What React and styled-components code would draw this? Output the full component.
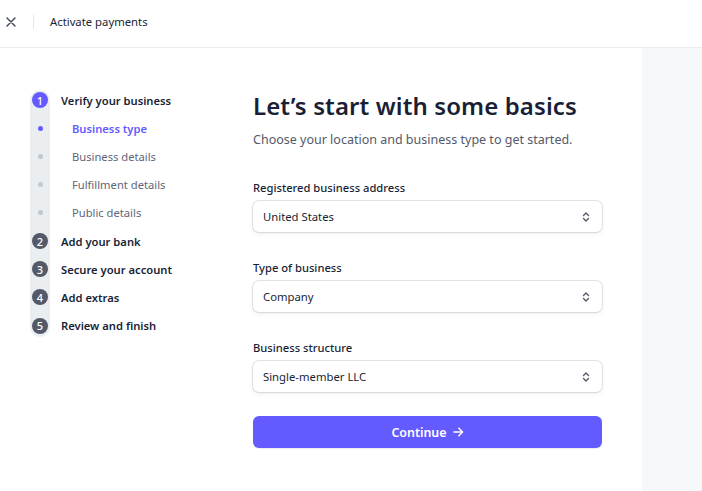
import styled, { createGlobalStyle } from "styled-components";
import React from "react";

const GlobalStyle = createGlobalStyle`
  * { box-sizing: border-box; }
  body {
    margin: 0;
    font-family: "Noto Sans", "Open Sans", sans-serif;
    color: #1a1f36;
    background: #fff;
  }
`;

const Page = styled.div`
  width: 702px;
  height: 491px;
  display: flex;
  flex-direction: column;
  overflow: hidden;
`;

const TopBar = styled.header`
  height: 48px;
  display: flex;
  align-items: center;
  padding-bottom: 4px;
  border-bottom: 1px solid #ebeef1;
  flex-shrink: 0;
`;

const CloseButton = styled.button`
  border: none;
  background: none;
  padding: 0;
  width: 22px;
  display: flex;
  justify-content: center;
  color: #3c4257;
`;

const Divider = styled.span`
  width: 1px;
  height: 14px;
  background: #e3e8ee;
  margin: 0 16px 0 11px;
`;

const TopTitle = styled.span`
  font-size: 11.3px;
  color: #1a1f36;
`;

const Body = styled.div`
  flex: 1;
  display: flex;
`;

const Main = styled.main`
  flex: 1;
  display: flex;
  align-items: flex-start;
  padding: 38px 0 0 30px;
`;

const Side = styled.aside`
  width: 60px;
  background: #f6f8fa;
`;

const StepList = styled.ol`
  position: relative;
  list-style: none;
  margin: 0;
  padding: 0;
  width: 223px;
  &::before {
    content: "";
    position: absolute;
    left: 0;
    top: 4px;
    bottom: 3px;
    width: 20px;
    border-radius: 10px;
    background: #ebeef1;
  }
`;

const StepRow = styled.li`
  position: relative;
  height: 28.2px;
  display: flex;
  align-items: center;
  font-size: 11.2px;
  font-weight: ${(p) => (p.$sub && !p.$active ? 400 : 600)};
  color: ${(p) => (p.$active ? "#635bff" : p.$sub ? "#5e6677" : "#1a1f36")};
`;

const Marker = styled.span`
  width: 20px;
  display: flex;
  justify-content: center;
  align-items: center;
  margin-right: ${(p) => (p.$sub ? "22px" : "11px")};
  flex-shrink: 0;
`;

const Circle = styled.span`
  width: 16px;
  height: 16px;
  border-radius: 50%;
  background: ${(p) => (p.$current ? "#635bff" : "#545969")};
  color: #fff;
  font-size: 11px;
  font-weight: 500;
  display: flex;
  align-items: center;
  justify-content: center;
  line-height: 1;
`;

const Dot = styled.span`
  width: 5px;
  height: 5px;
  border-radius: 50%;
  background: ${(p) => (p.$active ? "#635bff" : "#c0c8d2")};
`;

const Form = styled.form`
  width: 349px;
  margin-top: 3px;
  display: flex;
  flex-direction: column;
`;

const Heading = styled.h1`
  margin: 0;
  font-size: 24px;
  line-height: 34px;
  font-weight: 600;
  color: #1a1f36;
  letter-spacing: 0.1px;
`;

const Subtitle = styled.p`
  margin: 7px 0 29px;
  font-size: 12.5px;
  line-height: 20px;
  color: #545969;
`;

const Field = styled.div`
  display: flex;
  flex-direction: column;
  margin-bottom: 27px;
`;

const Label = styled.label`
  font-size: 11.2px;
  font-weight: 500;
  line-height: 18px;
  margin-bottom: 4px;
  color: #1a1f36;
`;

const SelectBox = styled.div`
  height: 31px;
  border-radius: 6px;
  background: #fff;
  box-shadow: 0 0 0 1px rgba(64, 68, 82, 0.14), 0 2px 4px rgba(64, 68, 82, 0.08);
  display: flex;
  align-items: center;
  justify-content: space-between;
  padding: 0 12px 0 10px;
  font-size: 11.3px;
  color: #1a1f36;
`;

const SubmitButton = styled.button`
  margin-top: -3px;
  height: 32px;
  border: none;
  border-radius: 6px;
  background: #635bff;
  color: #fff;
  font-family: inherit;
  font-size: 12.4px;
  font-weight: 600;
  display: flex;
  align-items: center;
  justify-content: center;
  gap: 6px;
  box-shadow: 0 1px 1px rgba(0, 0, 0, 0.08);
`;

const Chevrons = () => (
  <svg width="8" height="12" viewBox="0 0 8 12" fill="none" stroke="#545969" strokeWidth="1.4" strokeLinecap="round" strokeLinejoin="round">
    <path d="M1.5 4.5 4 2l2.5 2.5M1.5 7.5 4 10l2.5-2.5" />
  </svg>
);

const steps = [
  { label: "Verify your business", num: 1, current: true },
  { label: "Business type", sub: true, active: true },
  { label: "Business details", sub: true },
  { label: "Fulfillment details", sub: true },
  { label: "Public details", sub: true },
  { label: "Add your bank", num: 2 },
  { label: "Secure your account", num: 3 },
  { label: "Add extras", num: 4 },
  { label: "Review and finish", num: 5 },
];

const fields = [
  { label: "Registered business address", value: "United States" },
  { label: "Type of business", value: "Company" },
  { label: "Business structure", value: "Single-member LLC" },
];

const App = () => {
  return (
    <Page>
      <GlobalStyle />
      <TopBar>
        <CloseButton aria-label="Close">
          <svg width="10" height="10" viewBox="0 0 10 10" stroke="#3c4257" strokeWidth="1.4" strokeLinecap="round">
            <path d="M1 1l8 8M9 1 1 9" />
          </svg>
        </CloseButton>
        <Divider />
        <TopTitle>Activate payments</TopTitle>
      </TopBar>
      <Body>
        <Main>
          <StepList>
            {steps.map((s) => (
              <StepRow key={s.label} $sub={s.sub} $active={s.active}>
                <Marker $sub={s.sub}>
                  {s.sub ? <Dot $active={s.active} /> : <Circle $current={s.current}>{s.num}</Circle>}
                </Marker>
                {s.label}
              </StepRow>
            ))}
          </StepList>
          <Form onSubmit={(e) => e.preventDefault()}>
            <Heading>Let’s start with some basics</Heading>
            <Subtitle>Choose your location and business type to get started.</Subtitle>
            {fields.map((f) => (
              <Field key={f.label}>
                <Label>{f.label}</Label>
                <SelectBox>
                  {f.value}
                  <Chevrons />
                </SelectBox>
              </Field>
            ))}
            <SubmitButton type="submit">
              Continue
              <svg width="11" height="10" viewBox="0 0 11 10" fill="none" stroke="#fff" strokeWidth="1.5" strokeLinecap="round" strokeLinejoin="round">
                <path d="M1 5h8.5M5.8 1.2 9.6 5 5.8 8.8" />
              </svg>
            </SubmitButton>
          </Form>
        </Main>
        <Side />
      </Body>
    </Page>
  );
};

export default App;
